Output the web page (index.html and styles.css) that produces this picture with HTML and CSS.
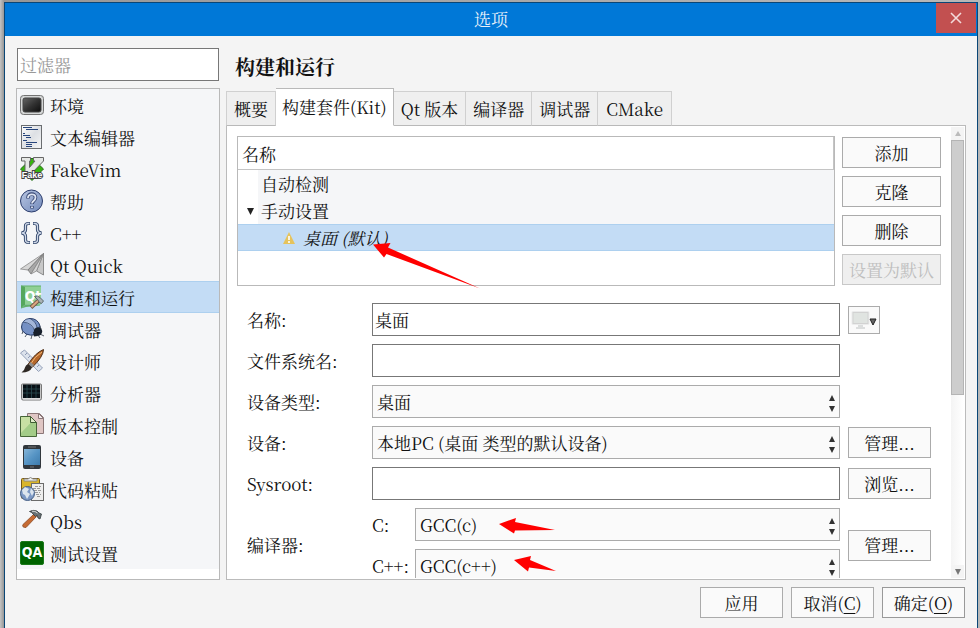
FILE: index.html
```html
<!DOCTYPE html>
<html lang="zh-CN">
<head>
    <meta charset="UTF-8">
    <meta name="viewport" content="width=device-width, initial-scale=1.0">
    <title>选项</title>
    <link rel="stylesheet" href="styles.css">
</head>
<body>
    <div class="window">
        <header class="titlebar">
            <h1>选项</h1>
            <button class="close" aria-label="关闭">
                <svg width="12" height="12" viewBox="0 0 12 12"><path d="M1 1l10 10M11 1L1 11" stroke="#f3dada" stroke-width="1.6"/></svg>
            </button>
        </header>

        <div class="content">
            <div class="panes">
                <aside class="sidebar">
                    <input class="filter" type="text" placeholder="过滤器" aria-label="过滤器">
                    <ul class="categories">
                        <li><a href="#">
                            <svg class="icon" viewBox="0 0 24 24"><defs><linearGradient id="scr" x1="0" y1="0" x2="1" y2="1"><stop offset="0" stop-color="#666"/><stop offset=".5" stop-color="#333"/><stop offset="1" stop-color="#0c0c0c"/></linearGradient></defs><rect x=".5" y="2.5" width="23" height="19" rx="3" fill="#d4d6d6" stroke="#737373"/><rect x="3" y="5" width="18" height="14" rx="2" fill="url(#scr)" stroke="#444"/></svg>
                            <span>环境</span></a></li>
                        <li><a href="#">
                            <svg class="icon" viewBox="0 0 24 24"><defs><linearGradient id="page" x1="0" y1="0" x2="1" y2="1"><stop offset="0" stop-color="#fff"/><stop offset=".5" stop-color="#dde0e4"/><stop offset="1" stop-color="#f4f5f6"/></linearGradient></defs><rect x="1.5" y=".5" width="20" height="23" fill="url(#page)" stroke="#6a6d70"/><path d="M3 2.500h9M6 4.500h12M3 8.500h2M3 10.500h7M6 12.500h5M3 15.500h4M6 17.500h11M6 19.500h6M6 21.500h6" stroke="#27457c"/></svg>
                            <span>文本编辑器</span></a></li>
                        <li><a href="#">
                            <svg class="icon" viewBox="0 0 24 24"><path d="M12 1l11.500 11L12 23.500.5 12z" fill="#36b50e" stroke="#2a6a1c"/><path d="M1.500.5h9v3.500H9.500v6.500L15 4h-1.500V.5h10V4L11 17H5V4H1.500z" fill="#e6e8e6" stroke="#666"/><text x="12" y="21" class="fake-text">Fake</text></svg>
                            <span>FakeVim</span></a></li>
                        <li><a href="#">
                            <svg class="icon" viewBox="0 0 24 24"><defs><linearGradient id="help" x1="0" y1="0" x2="1" y2="1"><stop offset="0" stop-color="#b9c6e2"/><stop offset="1" stop-color="#728abb"/></linearGradient></defs><circle cx="11.500" cy="12" r="11" fill="url(#help)" stroke="#2b3c6c"/><path d="M8 9.500V8.500C8 3.800 15.500 4 15.500 8.500c0 3.500-3.500 3.500-3.500 6.500M12 17v2.500" fill="none" stroke="#3a4a75" stroke-width="3.600"/><path d="M8 9V8.500C8 4.300 15.500 4.500 15.500 8.500c0 3.500-3.500 3.500-3.500 6M12 17.500v1.500" fill="none" stroke="#dfe5f2" stroke-width="1.800"/></svg>
                            <span>帮助</span></a></li>
                        <li><a href="#">
                            <svg class="icon" viewBox="0 0 24 24"><g fill="none" stroke="#34486d" stroke-width="3.200"><path d="M10 2.500H8.500Q5.500 2.500 5.500 5v3.500q0 3-4 3.500 4 .5 4 3.500V19q0 2.500 3 2.500H10M13 2.500h1.500q3 0 3 2.500v3.500q0 3 4 3.500-4 .5-4 3.500V19q0 2.500-3 2.500H13"/></g><g fill="none" stroke="#d0daea" stroke-width="1.300"><path d="M9.500 2.500h-1Q5.500 2.500 5.500 5v3.500q0 3-3.500 3.500 3.500.5 3.500 3.500V19q0 2.500 3 2.500h1M13.500 2.500h1q3 0 3 2.500v3.500q0 3 3.500 3.500-3.500.5-3.500 3.500V19q0 2.500-3 2.500h-1"/></g></svg>
                            <span>C++</span></a></li>
                        <li><a href="#">
                            <svg class="icon" viewBox="0 0 24 24"><path d="M23.500.5v21.500l-7-4z" fill="#c8c8c8" stroke="#777" stroke-width=".8"/><path d="M23.500.5L.5 16l7.500 1z" fill="#d6d6d6" stroke="#888" stroke-width=".8"/><path d="M23.500.5L8 17l3 4z" fill="#a8a8a8" stroke="#777" stroke-width=".8"/><path d="M23.500.5L11 21l5.500-3z" fill="#d4d4d4" stroke="#888" stroke-width=".8"/></svg>
                            <span>Qt Quick</span></a></li>
                        <li class="selected"><a href="#">
                            <svg class="icon" viewBox="0 0 24 24"><path d="M1 .5l4 1v18l-4 4z" fill="#55a75c"/><path d="M5 1h16v18.500H5z" fill="#8fd094"/><path d="M1 .5h20v1H1zM1 23.500l4-4h15v1L6 22z" fill="#62b069"/><text x="13" y="16" class="qt-text">Qt</text><path d="M11 22.500l8.500-8" stroke="#725248" stroke-width="3.800"/><path d="M11.500 22l8-7.500" stroke="#d8a580" stroke-width="2.200"/><path d="M14.500 11.500q3-1.500 5.500 1l3.500 3.500-2 2.500-2-1-2-3z" fill="#a9b2b4" stroke="#495257" stroke-width=".8"/></svg>
                            <span>构建和运行</span></a></li>
                        <li><a href="#">
                            <svg class="icon" viewBox="0 0 24 24"><path d="M3 14l-1 3M7 17l-2 3M12 18l-1 4M18 18l2 3M20 17l4 2M18 10l2-1 1 3" stroke="#555d68" fill="none"/><path d="M1.500 10Q2 2 10 1.500 18 1.500 20 9l-4 8.500Q10 19 6 17 1 14 1.500 10z" fill="#7590c4" stroke="#263a65"/><path d="M3 5Q6 2 11 2q5 3 6 8l-2 4Q11 7 3 5z" fill="#a4b6d9"/><path d="M3 5q10 1 12 10M10 1.500q6 3 7 9" stroke="#35496f" stroke-width=".8" fill="none"/><circle cx="18" cy="14.500" r="4.200" fill="#18202c"/><path d="M13 15q3 0 5 4l-4 .5z" fill="#18202c"/></svg>
                            <span>调试器</span></a></li>
                        <li><a href="#">
                            <svg class="icon" viewBox="0 0 24 24"><path d="M.5 4l4-3 18 18-4 3.500z" fill="#dce2ec" stroke="#94a0b8"/><path d="M5 6l2-2M8 9l2-2M11 12l2-2M14 15l2-2M17 18l2-2" stroke="#8c99b4"/><path d="M23.500.5q0 7-11.500 18l-4-3Q15 4 23.500.5z" fill="#b4662a" stroke="#4b2a12"/><path d="M22 3Q15 7 10 16" stroke="#f0b878" fill="none"/><path d="M10.500 13l3.500 3-2 2.500-3.500-3z" fill="#8d8d8d"/><path d="M8 15l4 3.500q-2 5-10.500 5 3-2 3.500-5 .5-2.500 3-3.500z" fill="#2f2924"/></svg>
                            <span>设计师</span></a></li>
                        <li><a href="#">
                            <svg class="icon" viewBox="0 0 24 24"><path d="M1.500 4q0-1 1-1h18q1 0 1 1v13.500q0 1.500-1.500 1.500H3q-1.500 0-1.500-1.500z" fill="#c6c6c6" stroke="#777"/><rect x="3" y="3.500" width="17" height="13.500" fill="#081015"/><path d="M7 4v13M11.500 4v13M16 4v13M3 8h17M3 12h17" stroke="#2b4c52" stroke-width=".8"/><path d="M3 18h17" stroke="#eee"/></svg>
                            <span>分析器</span></a></li>
                        <li><a href="#">
                            <svg class="icon" viewBox="0 0 24 24"><path d="M7.500.5h12l4 4v16h-16z" fill="#dfc6c4" stroke="#8b7778"/><path d="M18.500.5v5h5z" fill="#f5ecec" stroke="#8b7778"/><path d="M.5 3.500h10l6 6v14H.5z" fill="#a3cc88" stroke="#466537"/><path d="M1 4h9v6.500L1 20z" fill="#c8e0a4"/><path d="M10.500 3.500v6h6z" fill="#e1edc9" stroke="#405d35"/></svg>
                            <span>版本控制</span></a></li>
                        <li><a href="#">
                            <svg class="icon" viewBox="0 0 24 24"><defs><linearGradient id="pad" x1="0" y1="0" x2="1" y2="1"><stop offset="0" stop-color="#86b5d8"/><stop offset=".5" stop-color="#5795c5"/><stop offset="1" stop-color="#3d7bac"/></linearGradient></defs><rect x="3" y="0" width="18" height="24" rx="2" fill="#31373d"/><rect x="4" y="4" width="16" height="16" fill="url(#pad)"/><path d="M8 2h8M10 22h4" stroke="#777"/></svg>
                            <span>设备</span></a></li>
                        <li><a href="#">
                            <svg class="icon" viewBox="0 0 24 24"><rect x="1.500" y="1.500" width="18" height="20" rx="1" fill="#d9b52b" stroke="#76591b"/><path d="M4 4V2h4q2.500-3 5 0h4v2z" fill="#f1f1ed" stroke="#888"/><rect x="11.500" y="6.500" width="12" height="17" fill="#eee" stroke="#6b6b6b"/><path d="M15 9.500h6M13 11.500h8M14 13.500h7M15 15.500h5M16 17.500h5M17 19.500h4" stroke="#999" stroke-dasharray="3 1"/><circle cx="7.500" cy="16.500" r="7" fill="#7c98c4" stroke="#455f85"/><path d="M2 13l3-3 4 2-2 3 3 2-3 5-2-4-2-1zM11 11l3 4-2 4-2-4z" fill="#dce5ee"/></svg>
                            <span>代码粘贴</span></a></li>
                        <li><a href="#">
                            <svg class="icon" viewBox="0 0 24 24"><path d="M3 15.500L14 5l2.500 2.500L6 18.500q-4.500 0-3-3z" fill="#c66b34" stroke="#8c4b25" stroke-width=".8"/><path d="M9.500 2.500Q13 .5 17 2l2 2 2.500 1-1.500 5-2-1-1-3-1.500 1.500L13 5q-1-2-3.500-2.500z" fill="#687174" stroke="#343b3e" stroke-width=".8"/><path d="M12 2.200q3-.5 5.500 1.800" stroke="#d9dddd" fill="none"/></svg>
                            <span>Qbs</span></a></li>
                        <li><a href="#">
                            <svg class="icon" viewBox="0 0 24 24"><rect x=".5" y=".5" width="23" height="23" rx="1.500" fill="#006400" stroke="#1b7a1b"/><text x="12" y="16" class="qa-text">QA</text></svg>
                            <span>测试设置</span></a></li>
                    </ul>
                </aside>

                <main class="page">
                    <h2>构建和运行</h2>
                    <nav class="tabs">
                        <button>概要</button>
                        <button class="active">构建套件(Kit)</button>
                        <button>Qt 版本</button>
                        <button>编译器</button>
                        <button>调试器</button>
                        <button>CMake</button>
                    </nav>
                    <section class="panel">
                        <div class="panel-body">
                            <div class="kits">
                                <div class="tree">
                                    <div class="tree-head">名称</div>
                                    <ul>
                                        <li class="group"><span class="twisty"></span><span class="group-name">自动检测</span></li>
                                        <li class="group">
                                            <span class="twisty"><svg width="7" height="7" viewBox="0 0 7 7"><path d="M0 0h7L3.500 7z" fill="#222"/></svg></span>
                                            <span class="group-name">手动设置</span>
                                        </li>
                                        <li class="kit">
                                            <svg width="12" height="12" viewBox="0 0 12 12"><path d="M6 0l6 12H0z" fill="#e6c35c"/><path d="M6 4v4M6 9v2" stroke="#fff" stroke-width="1.600"/></svg>
                                            <em>桌面 (默认)</em>
                                            <svg class="arrow arrow-kit" width="107" height="46" viewBox="0 0 107 46"><path d="M0 1.500L17.500 0 15 4.500 107 45.500 13.500 11 11 14.500z"/></svg>
                                        </li>
                                    </ul>
                                </div>
                                <div class="kit-buttons">
                                    <button>添加</button>
                                    <button>克隆</button>
                                    <button>删除</button>
                                    <button disabled>设置为默认</button>
                                </div>
                            </div>

                            <form class="kit-form">
                                <label for="name">名称:</label>
                                <input id="name" type="text" value="桌面">
                                <button type="button" class="icon-button" aria-label="图标">
                                    <svg width="26" height="20" viewBox="0 0 26 20"><rect x=".5" y="1" width="18" height="14" rx="1.500" fill="#ebecec"/><rect x="2" y="2.500" width="15" height="11" fill="#e0e4e1" stroke="#d2d2d2"/><path d="M7 15h5v2h2v2H5v-2h2z" fill="#dcdede"/><path d="M19 9h6l-3 6z" fill="#666" stroke="#222"/></svg>
                                </button>

                                <label for="fsname">文件系统名:</label>
                                <input id="fsname" type="text">

                                <label for="type">设备类型:</label>
                                <div class="combo"><select id="type"><option>桌面</option></select><svg width="6" height="17" viewBox="0 0 6 17"><path d="M3 0l3 6H0zM0 11h6l-3 6z"/></svg></div>

                                <label for="device">设备:</label>
                                <div class="combo"><select id="device"><option>本地PC (桌面 类型的默认设备)</option></select><svg width="6" height="17" viewBox="0 0 6 17"><path d="M3 0l3 6H0zM0 11h6l-3 6z"/></svg></div>
                                <button type="button">管理...</button>

                                <label for="sysroot">Sysroot:</label>
                                <input id="sysroot" type="text">
                                <button type="button">浏览...</button>

                                <span class="label">编译器:</span>
                                <div class="compilers">
                                    <label for="cc">C:</label>
                                    <div class="combo"><select id="cc"><option>GCC(c)</option></select><svg width="6" height="17" viewBox="0 0 6 17"><path d="M3 0l3 6H0zM0 11h6l-3 6z"/></svg>
                                        <svg class="arrow arrow-cc" width="56" height="16" viewBox="0 0 56 16"><path d="M0 6L17 0 16 4 56 12 16 12.500 15 15.500z"/></svg></div>
                                    <label for="cxx">C++:</label>
                                    <div class="combo"><select id="cxx"><option>GCC(c++)</option></select><svg width="6" height="17" viewBox="0 0 6 17"><path d="M3 0l3 6H0zM0 11h6l-3 6z"/></svg>
                                        <svg class="arrow arrow-cxx" width="42" height="16" viewBox="0 0 42 16"><path d="M0 4L17 0 16 4 42 15 15 11.500 14 15.500z"/></svg></div>
                                </div>
                                <button type="button">管理...</button>
                            </form>
                        </div>
                        <div class="scrollbar" aria-hidden="true">
                            <span class="step"><svg width="6" height="5" viewBox="0 0 6 5"><path d="M3 0l3 5H0z" fill="#bbb"/></svg></span>
                            <div class="track"><div class="thumb"></div></div>
                            <span class="step"><svg width="6" height="6" viewBox="0 0 6 6"><path d="M0 0h6L3 6z" fill="#777"/></svg></span>
                        </div>
                    </section>
                </main>
            </div>

            <footer class="actions">
                <button>应用</button>
                <button>取消(<u>C</u>)</button>
                <button class="default">确定(<u>O</u>)</button>
            </footer>
        </div>
    </div>
</body>
</html>
```
FILE: styles.css
```css
* {
    box-sizing: border-box;
}

body {
    margin: 0;
    height: 100vh;
    overflow: hidden;
    padding: 2px 2px 0 4px;
    background: linear-gradient(to right, #c4c4c4, #969696 4px, #b8b8b8);
    font-family: "Noto Serif CJK SC", "Noto Serif", "Liberation Serif", "Noto Sans CJK SC", serif;
    font-size: 17px;
    line-height: 24px;
    color: #111;
}

ul {
    list-style: none;
    margin: 0;
    padding: 0;
}

input, select, button {
    font: inherit;
    color: inherit;
    border-radius: 0;
    margin: 0;
}

/* Window */
.window {
    display: flex;
    flex-direction: column;
    height: 100%;
    border: 1px solid #0a4676;
    border-bottom: none;
    background: #f4f4f4;
}

.titlebar {
    position: relative;
    height: 33px;
    background: #0078d7;
    color: #e8f1fa;
    text-align: center;
}

.titlebar h1 {
    margin: 0;
    font-size: 17px;
    font-weight: normal;
    line-height: 32px;
}

.close {
    position: absolute;
    top: 0;
    right: 1px;
    width: 40px;
    height: 30px;
    padding: 0;
    border: none;
    background: #c25050;
    line-height: 0;
}

.content {
    flex: 1;
    min-height: 0;
    display: flex;
    flex-direction: column;
    gap: 7px;
    padding: 12px 11px 10px;
}

.panes {
    flex: 1;
    min-height: 0;
    display: flex;
    gap: 6px;
}

/* Category list */
.sidebar {
    width: 204px;
    display: flex;
    flex-direction: column;
    gap: 7px;
}

.filter {
    height: 33px;
    margin: 0 1px;
    padding: 0 2px;
    border: 1px solid #777;
    background: #fff;
}

.filter::placeholder {
    color: #999;
}

.categories {
    flex: 1;
    border: 1px solid #b9b9b9;
    background: #fff;
}

.categories li {
    height: 32px;
    background: #f5f6f8;
}

.categories a {
    display: flex;
    align-items: center;
    gap: 6px;
    height: 100%;
    padding-left: 3px;
    color: inherit;
    text-decoration: none;
}

.categories span {
    padding-top: 2px;
}

.categories .selected {
    background: #c3dcf5;
    border: solid #add0ef;
    border-width: 1px 0;
}

.icon {
    width: 24px;
    height: 24px;
}

.fake-text {
    font: bold 9px "Liberation Sans", sans-serif;
    text-anchor: middle;
    fill: #fff;
    stroke: #444;
    stroke-width: 2px;
    paint-order: stroke;
}

.qt-text {
    font: bold 14px "DejaVu Sans Condensed", "Roboto", sans-serif;
    text-anchor: middle;
    fill: #fff;
}

.qa-text {
    font: bold 14px "DejaVu Sans Condensed", "Roboto", sans-serif;
    text-anchor: middle;
    fill: #fff;
}

/* Page */
.page {
    flex: 1;
    min-width: 0;
    display: flex;
    flex-direction: column;
}

.page h2 {
    margin: 0;
    padding: 4px 0 0 9px;
    height: 40px;
    font-size: 20px;
    line-height: 30px;
}

.tabs {
    display: flex;
    align-items: flex-end;
    position: relative;
    margin-bottom: -1px;
}

.tabs button {
    height: 35px;
    padding: 0 7px;
    border: 1px solid #d0d0d0;
    border-left-width: 0;
    border-bottom-color: #b9b9b9;
    background: #efefef;
    white-space: nowrap;
}

.tabs button:first-child {
    border-left-width: 1px;
}

.tabs button:last-child {
    padding: 0 8px;
}

.tabs .active {
    height: 38px;
    padding: 0 6px;
    border-color: #b9b9b9;
    border-bottom-color: #fff;
    background: #fff;
}

.panel {
    flex: 1;
    min-height: 0;
    display: flex;
    padding: 1px;
    border: 1px solid #bbb;
    background: #fff;
}

.panel-body {
    flex: 1;
    min-width: 0;
    overflow: hidden;
    padding: 9px 10px 0 9px;
}

/* Kit tree */
.kits {
    display: flex;
    gap: 7px;
}

.tree {
    flex: 1;
    height: 150px;
    border: 1px solid #b9b9b9;
}

.tree-head {
    height: 33px;
    padding: 0 4px;
    border-right: 1px solid #c4c4c4;
    border-bottom: 1px solid #c4c4c4;
    line-height: 34px;
}

.group {
    display: flex;
    height: 27px;
}

.twisty {
    width: 20px;
    padding: 11px 0 0 9px;
    line-height: 0;
}

.group-name {
    flex: 1;
    padding-left: 3px;
    background: #f5f6f8;
    line-height: 28px;
}

.kit {
    position: relative;
    display: flex;
    align-items: center;
    gap: 8px;
    height: 27px;
    padding-left: 45px;
    border: solid #add0ef;
    border-width: 1px 0;
    background: #c3dcf5;
}

.kit-buttons {
    width: 99px;
    display: flex;
    flex-direction: column;
    gap: 8px;
    padding-top: 1px;
}

.kit-buttons button,
.kit-form button,
.actions button {
    height: 31px;
    padding: 0;
    border: 1px solid #ababab;
    background: #fafafa;
}

.kit-buttons button:disabled {
    border-color: #c8c8c8;
    background: #efefef;
    color: #bebebe;
}

/* Kit form */
.kit-form {
    display: grid;
    grid-template-columns: 117px 1fr 93px;
    gap: 8px;
    align-items: center;
    padding: 17px 0 0 10px;
}

.kit-form label,
.kit-form .label {
    grid-column: 1;
}

.kit-form input,
.kit-form select {
    width: 100%;
    height: 33px;
    padding: 0 2px;
    border: 1px solid #777;
    background: #fff;
}

.kit-form select {
    display: block;
    appearance: none;
    padding: 0 4px;
    border-color: #ababab;
    background: #fafafa;
}

.kit-form button {
    width: 83px;
}

.kit-form .icon-button {
    width: 32px;
    height: 28px;
    line-height: 0;
}

.combo {
    position: relative;
}

.combo svg {
    position: absolute;
    right: 5px;
    top: 10px;
    fill: #333;
}

.compilers {
    display: grid;
    grid-template-columns: 35px 1fr;
    gap: 8px;
    align-items: center;
}

/* Red pointers */
.arrow path {
    fill: #f00;
}

.arrow-kit {
    position: absolute;
    left: 135px;
    top: 18px;
}

.combo .arrow-cc,
.combo .arrow-cxx {
    left: 84px;
    right: auto;
}

.combo .arrow-cxx {
    left: 99px;
    top: 7px;
}

/* Scrollbar */
.scrollbar {
    width: 13px;
    display: flex;
    flex-direction: column;
    background: #f4f4f4;
}

.step {
    display: flex;
    align-items: center;
    justify-content: center;
    height: 13px;
}

.track {
    flex: 1;
    background: linear-gradient(to right, #f4f4f4, #fff);
}

.thumb {
    height: 60%;
    border: 1px solid #b4b4b4;
    background: #cdcdcd;
}

/* Bottom buttons */
.actions {
    display: flex;
    justify-content: flex-end;
    gap: 8px;
    padding-right: 1px;
}

.actions button {
    width: 83px;
}

.actions u {
    text-underline-offset: 3px;
}

.actions .default {
    border-color: #999;
}
```
